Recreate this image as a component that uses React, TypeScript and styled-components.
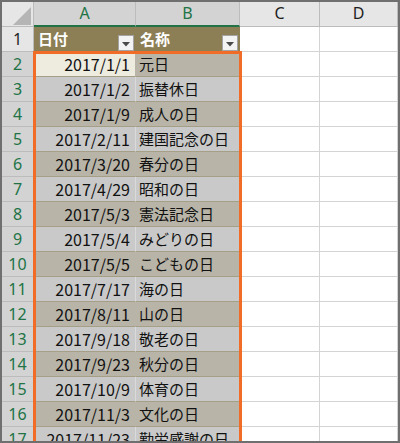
import styled, { createGlobalStyle } from "styled-components";

const GlobalStyle = createGlobalStyle`
  body {
    margin: 0;
    background: #ffffff;
  }
`;

const Frame = styled.div`
  position: relative;
  width: 400px;
  height: 443px;
  box-sizing: border-box;
  border: 2px solid #6f6f6f;
  overflow: hidden;
  background: #ffffff;
  font-family: "Noto Sans CJK JP", "Noto Sans", sans-serif;
`;

const Grid = styled.div`
  display: grid;
  grid-template-columns: 32px 102px 104px 80px 78px;
  grid-auto-rows: 25px;
`;

const Cell = styled.div`
  box-sizing: border-box;
  border-right: 1px solid #d4d4d4;
  border-bottom: 1px solid #d4d4d4;
  font-size: 15px;
  line-height: 24px;
  white-space: nowrap;
  overflow: hidden;
`;

const Corner = styled(Cell)`
  background: #e6e6e6;
  border-right-color: #bcbcbc;
  border-bottom-color: #bcbcbc;
  display: flex;
  align-items: flex-end;
  justify-content: flex-end;
  padding: 0 2px 1px 0;
`;

const ColHead = styled(Cell)<{ $active?: boolean }>`
  background: ${(p) => (p.$active ? "#d3d3d3" : "#e6e6e6")};
  color: ${(p) => (p.$active ? "#217346" : "#1e1e1e")};
  border-right-color: #bcbcbc;
  border-bottom: ${(p) => (p.$active ? "2px solid #217346" : "1px solid #bcbcbc")};
  line-height: 23px;
  text-align: center;
  font-size: 16px;
  font-family: "Noto Sans", "Liberation Sans", sans-serif;
`;

const RowHead = styled(Cell)<{ $active?: boolean }>`
  background: ${(p) => (p.$active ? "#d3d3d3" : "#e6e6e6")};
  color: ${(p) => (p.$active ? "#217346" : "#1e1e1e")};
  border-right-color: #bcbcbc;
  border-bottom-color: #bcbcbc;
  text-align: center;
  font-size: 16px;
  font-family: "Noto Sans", "Liberation Sans", sans-serif;
`;

const HeaderCell = styled(Cell)`
  position: relative;
  background: #8c7e55;
  border-right-color: #8c7e55;
  border-bottom-color: #8c7e55;
  color: #ffffff;
  font-weight: bold;
  padding-left: 4px;
`;

const FilterButton = styled.span`
  position: absolute;
  right: 1px;
  bottom: 0;
  width: 16px;
  height: 16px;
  box-sizing: border-box;
  background: #f3f3f3;
  border: 1px solid #a3a3a3;
  display: flex;
  align-items: center;
  justify-content: center;
  padding-top: 2px;
`;

const DataCell = styled(Cell)<{ $dark: boolean; $active?: boolean; $right?: boolean }>`
  background: ${(p) => (p.$active ? "#eeebdf" : p.$dark ? "#b8b4a8" : "#c9c9c9")};
  border-bottom-color: #a59f88;
  border-right-color: ${(p) => (p.$dark ? "#b8b4a8" : "#dadada")};
  color: #111111;
  text-align: ${(p) => (p.$right ? "right" : "left")};
  font-size: ${(p) => (p.$right ? "16px" : "15px")};
  padding: ${(p) => (p.$right ? "0 5px 0 0" : "0 0 0 3px")};
`;

const EmptyCell = styled(Cell)``;

const Selection = styled.div`
  position: absolute;
  left: 31px;
  top: 49px;
  width: 209px;
  height: 420px;
  box-sizing: border-box;
  border: 3px solid #f06c27;
  pointer-events: none;
`;

const holidays: [string, string][] = [
  ["2017/1/1", "元日"],
  ["2017/1/2", "振替休日"],
  ["2017/1/9", "成人の日"],
  ["2017/2/11", "建国記念の日"],
  ["2017/3/20", "春分の日"],
  ["2017/4/29", "昭和の日"],
  ["2017/5/3", "憲法記念日"],
  ["2017/5/4", "みどりの日"],
  ["2017/5/5", "こどもの日"],
  ["2017/7/17", "海の日"],
  ["2017/8/11", "山の日"],
  ["2017/9/18", "敬老の日"],
  ["2017/9/23", "秋分の日"],
  ["2017/10/9", "体育の日"],
  ["2017/11/3", "文化の日"],
  ["2017/11/23", "勤労感謝の日"],
];

function Arrow() {
  return (
    <svg width="8" height="5" viewBox="0 0 8 5">
      <path d="M0 0 H8 L4 4.5 Z" fill="#4a4a4a" />
    </svg>
  );
}

export default function App() {
  return (
    <>
      <GlobalStyle />
      <Frame>
        <Grid>
          <Corner>
            <svg width="18" height="18" viewBox="0 0 18 18">
              <path d="M18 0 V18 H0 Z" fill="#b5b5b5" />
            </svg>
          </Corner>
          <ColHead $active>A</ColHead>
          <ColHead $active>B</ColHead>
          <ColHead>C</ColHead>
          <ColHead>D</ColHead>

          <RowHead>1</RowHead>
          <HeaderCell>
            日付
            <FilterButton>
              <Arrow />
            </FilterButton>
          </HeaderCell>
          <HeaderCell>
            名称
            <FilterButton>
              <Arrow />
            </FilterButton>
          </HeaderCell>
          <EmptyCell />
          <EmptyCell />

          {holidays.map(([date, name], i) => {
            const row = i + 2;
            const dark = row % 2 === 0;
            return [
              <RowHead key={`h${row}`} $active>
                {row}
              </RowHead>,
              <DataCell key={`a${row}`} $dark={dark} $active={row === 2} $right>
                {date}
              </DataCell>,
              <DataCell key={`b${row}`} $dark={dark}>
                {name}
              </DataCell>,
              <EmptyCell key={`c${row}`} />,
              <EmptyCell key={`d${row}`} />,
            ];
          })}
        </Grid>
        <Selection />
      </Frame>
    </>
  );
}
